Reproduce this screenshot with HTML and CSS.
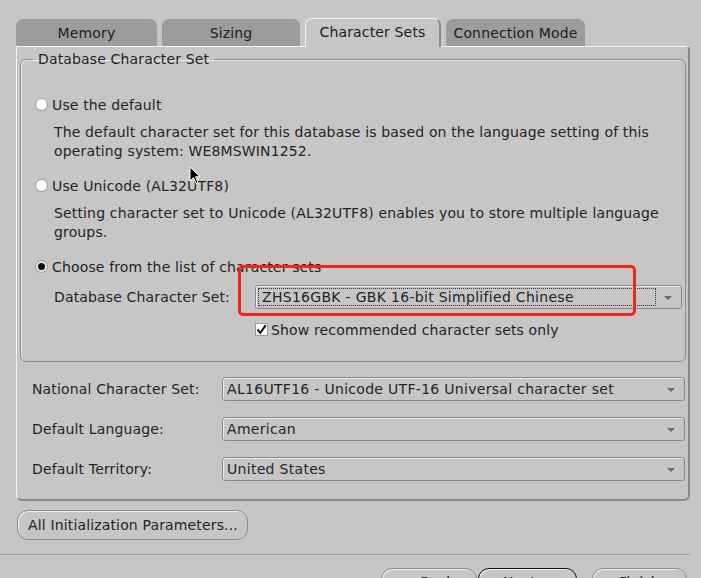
FILE: index.html
```html
<!DOCTYPE html>
<html>
<head>
<meta charset="utf-8">
<link rel="stylesheet" href="styles.css">
</head>
<body>
<div class="window">
  <div class="tabs">
    <div class="tab w-mem">Memory</div>
    <div class="tab w-size">Sizing</div>
    <div class="tab tab-sel w-cs">Character Sets</div>
    <div class="tab w-conn">Connection Mode</div>
  </div>
  <div class="panel">
    <fieldset class="group">
      <legend class="legend">Database Character Set</legend>
      <div class="radio-row first"><span class="radio"></span>Use the default</div>
      <div class="desc">The default character set for this database is based on the language setting of this<br>operating system: WE8MSWIN1252.</div>
      <div class="radio-row"><span class="radio"></span>Use Unicode (AL32UTF8)</div>
      <div class="desc">Setting character set to Unicode (AL32UTF8) enables you to store multiple language<br>groups.</div>
      <div class="radio-row"><span class="radio radio-on"></span>Choose from the list of character sets</div>
      <div class="cs-row">
        <span class="cs-label">Database Character Set:</span>
        <div class="combo combo-cs"><span class="focus">ZHS16GBK - GBK 16-bit Simplified Chinese</span><span class="arrow"></span></div>
      </div>
      <div class="check-row"><span class="check"><svg width="11" height="11" viewBox="0 0 11 11"><path d="M1.5 5.5 L4.3 8.8 L9.8 1.2" fill="none" stroke="#111" stroke-width="2"/></svg></span>Show recommended character sets only</div>
    </fieldset>
    <div class="grid">
      <span class="label">National Character Set:</span>
      <div class="combo"><span class="ctext">AL16UTF16 - Unicode UTF-16 Universal character set</span><span class="arrow"></span></div>
      <span class="label">Default Language:</span>
      <div class="combo"><span class="ctext">American</span><span class="arrow"></span></div>
      <span class="label">Default Territory:</span>
      <div class="combo"><span class="ctext">United States</span><span class="arrow"></span></div>
    </div>
  </div>
  <div class="btn-row">
    <button class="btn">All Initialization Parameters...</button>
  </div>
  <div class="sep"></div>
  <div class="nav">
    <div class="btn nav-btn w-back">&lt; <u>B</u>ack</div>
    <div class="btn nav-btn w-next"><u>N</u>ext &gt;</div>
    <div class="btn nav-btn w-finish"><u>F</u>inish</div>
  </div>
  <div class="highlight"></div>
  <svg class="cursor" width="12" height="19" viewBox="0 0 12 19"><path d="M1 1 L1 15 L4.5 11.5 L7 17.5 L9 16.6 L6.6 10.8 L11 10.8 Z" fill="#000" stroke="#fff" stroke-width="1"/></svg>
</div>
</body>
</html>
```

FILE: styles.css
```css
* { box-sizing: border-box; }
html, body { margin: 0; padding: 0; }
body {
  background: #c6c6c6;
  font-family: "DejaVu Sans", sans-serif;
  font-size: 14px;
  letter-spacing: 0.15px;
  color: #242424;
}
.window {
  position: relative;
  width: 701px;
  height: 578px;
  overflow: hidden;
}
.tabs {
  display: flex;
  gap: 5px;
  padding: 18px 0 0 16px;
  height: 46px;
  align-items: flex-end;
}
.tab {
  height: 27px;
  background: #9c9c9c;
  border-radius: 7px 7px 0 0;
  text-align: center;
  line-height: 28px;
  color: #202020;
}
.tab-sel {
  position: relative;
  z-index: 2;
  height: 29px;
  margin-bottom: -1px;
  background: #c6c6c6;
  border-top: 1px solid #f2f2f2;
  border-left: 1px solid #f2f2f2;
  border-right: 2px solid #8c8c8c;
  line-height: 27px;
}
.w-mem { width: 141px; }
.w-size { width: 138px; }
.w-cs { width: 136px; }
.w-conn { width: 139px; }
.panel {
  position: relative;
  margin-left: 16px;
  width: 674px;
  height: 455px;
  border-top: 1px solid #f2f2f2;
  border-left: 1px solid #f2f2f2;
  border-right: 2px solid #8a8a8a;
  border-bottom: 2px solid #8a8a8a;
  border-radius: 0 4px 6px 6px;
  padding: 0 0 0 3px;
}
.group {
  width: 666px;
  margin: 3px 0 0 0;
  padding: 0 0 22px 14px;
  border: 1px solid #8c8c8c;
  border-radius: 6px;
  box-shadow: inset 1px 1px 0 #e8e8e8;
}
.legend {
  margin-left: -2px;
  padding: 0 5px;
  line-height: 19px;
}
.radio-row {
  display: flex;
  align-items: center;
  height: 19px;
  margin-top: 15px;
}
.radio-row.first { margin-top: 26px; }
.radio {
  width: 13px;
  height: 13px;
  border-radius: 50%;
  background: #fff;
  border: 1px solid #9a9a9a;
  margin-right: 4px;
  position: relative;
  flex: none;
}
.radio-on {
  background: #e6e6e6;
}
.radio-on::after {
  content: "";
  position: absolute;
  left: 2px;
  top: 2px;
  width: 7px;
  height: 7px;
  border-radius: 50%;
  background: #111;
}
.desc {
  margin: 9px 0 0 19px;
  line-height: 19px;
}
.cs-row {
  display: flex;
  align-items: center;
  margin: 9px 0 0 19px;
}
.cs-label { width: 201px; }
.combo {
  position: relative;
  height: 24px;
  border: 1px solid #8a8a8a;
  border-radius: 3px;
  box-shadow: inset 1px 1px 0 #ececec;
  display: flex;
  align-items: center;
  letter-spacing: 0.3px;
}
.combo-cs {
  width: 427px;
  padding: 0 25px 0 2px;
}
.focus {
  flex: 1;
  height: 18px;
  line-height: 16px;
  border: 1px dotted #333;
  padding-left: 3px;
}
.ctext { padding-left: 4px; }
.arrow {
  position: absolute;
  right: 9px;
  top: 10px;
  width: 0;
  height: 0;
  border-left: 4px solid transparent;
  border-right: 4px solid transparent;
  border-top: 4px solid #6c6c6c;
}
.check-row {
  display: flex;
  align-items: center;
  height: 19px;
  margin: 11px 0 0 220px;
}
.check {
  width: 13px;
  height: 13px;
  background: #fff;
  border: 1px solid #9a9a9a;
  margin-right: 3px;
  display: flex;
  align-items: center;
  justify-content: center;
}
.grid {
  display: grid;
  grid-template-columns: 190px 463px;
  row-gap: 16px;
  align-items: center;
  margin: 15px 0 0 12px;
}
.label { line-height: 19px; }
.btn-row {
  padding: 9px 0 0 17px;
}
.btn {
  font-family: "DejaVu Sans", sans-serif;
  font-size: 14px;
  letter-spacing: 0.15px;
  color: #242424;
  background: #c6c6c6;
  border: 1px solid #8c8c8c;
  border-radius: 11px;
  box-shadow: inset 1px 1px 0 #f0f0f0;
  height: 30px;
  width: 231px;
  padding: 0 0 0 10px;
  text-align: left;
}
.sep {
  margin-top: 14px;
  width: 690px;
  height: 1px;
  background: #9e9e9e;
}
.nav {
  display: flex;
  padding: 13px 0 0 381px;
}
.nav-btn {
  height: 30px;
  line-height: 17px;
  padding: 5px 0 0 0;
  text-align: center;
  flex: none;
}
.nav-btn u { text-decoration: underline; }
.w-back { width: 96px; }
.w-next { width: 99px; margin-left: 1px; border-color: #111; }
.w-finish { width: 95px; margin-left: 15px; }
.highlight {
  position: absolute;
  left: 238px;
  top: 265px;
  width: 398px;
  height: 51px;
  border: 3px solid #f4231c;
  border-radius: 5px;
}
.cursor {
  position: absolute;
  left: 189px;
  top: 166px;
}
```
